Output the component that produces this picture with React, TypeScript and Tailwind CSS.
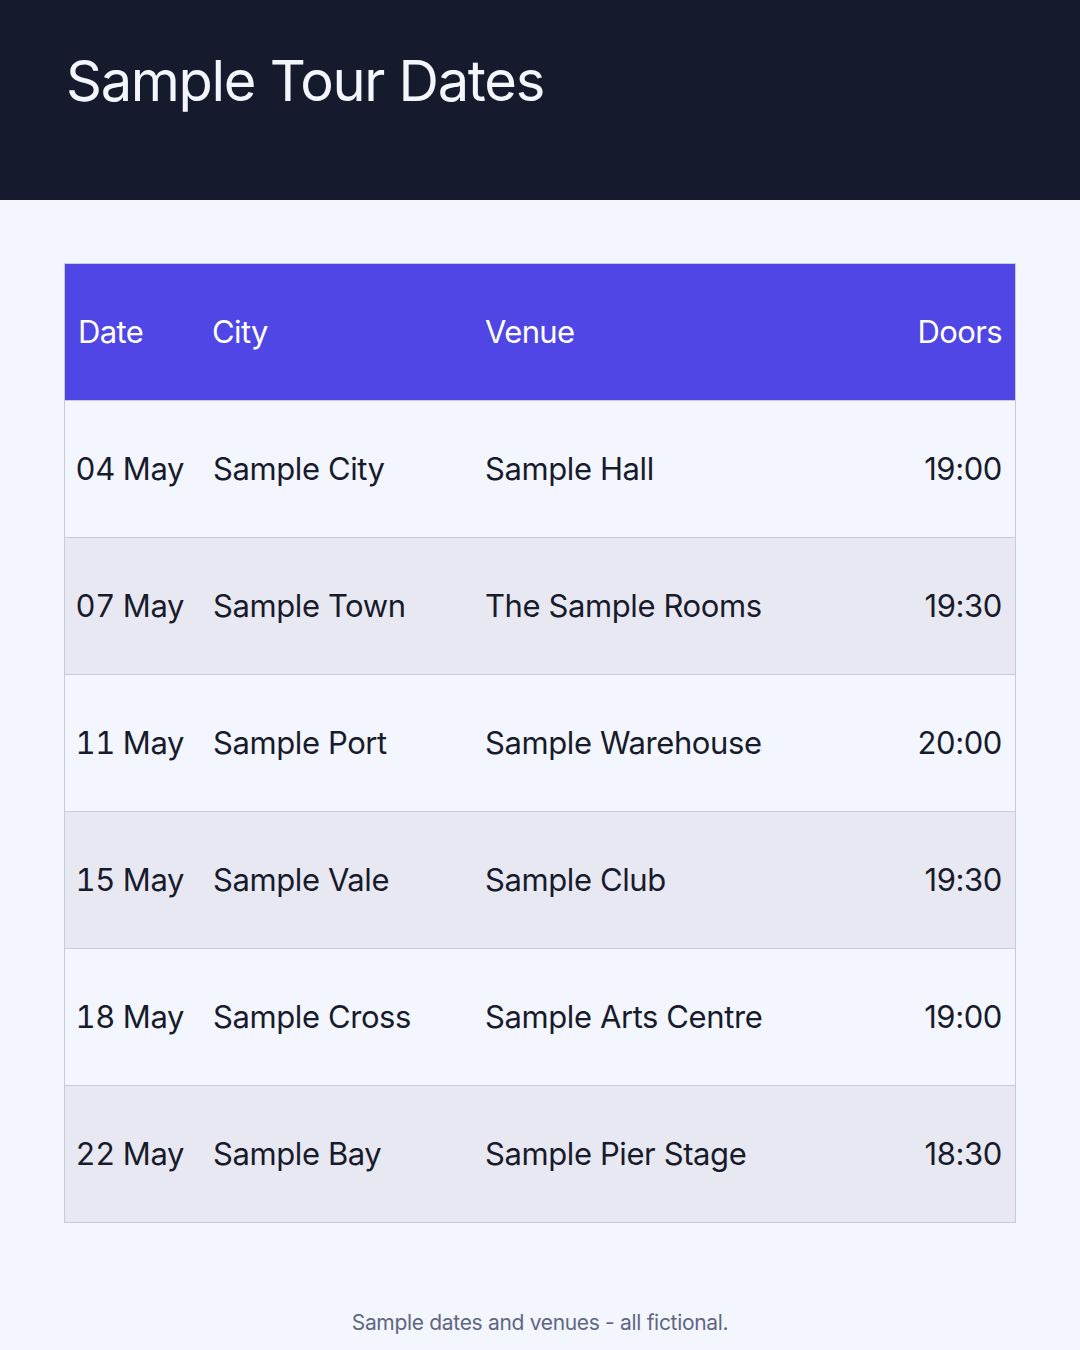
const dates = [
  { date: "04 May", city: "Sample City", venue: "Sample Hall", doors: "19:00" },
  { date: "07 May", city: "Sample Town", venue: "The Sample Rooms", doors: "19:30" },
  { date: "11 May", city: "Sample Port", venue: "Sample Warehouse", doors: "20:00" },
  { date: "15 May", city: "Sample Vale", venue: "Sample Club", doors: "19:30" },
  { date: "18 May", city: "Sample Cross", venue: "Sample Arts Centre", doors: "19:00" },
  { date: "22 May", city: "Sample Bay", venue: "Sample Pier Stage", doors: "18:30" },
];

const row = "grid grid-cols-[134px_273px_1fr_auto] items-center h-[137px] border-b border-[#c9cbdb]";

export default function App() {
  return (
    <div className="min-h-[1350px] w-[1080px] bg-[#f3f6fe] font-['Inter',sans-serif] text-[#181b2c]">
      {/* Header */}
      <header className="h-[200px] bg-[#161a2d] px-[66px] pt-[46px]">
        <h1 className="text-[56px] leading-[70px] tracking-[-0.023em] text-[#f3f6fe]">Sample Tour Dates</h1>
      </header>

      {/* Table */}
      <main className="px-[64px] pt-[63px]">
        <div className="border border-b-0 border-[#c9cbdb]">
          <div className={`${row} bg-[#4f46e5] text-white text-[31px] tracking-[-0.02em]`}>
            <span className="pl-[13px]">Date</span>
            <span className="pl-[13px]">City</span>
            <span className="pl-[13px]">Venue</span>
            <span className="pr-[13px] text-right">Doors</span>
          </div>
          {dates.map((d, i) => (
            <div
              key={d.date}
              className={`${row} text-[31px] tracking-[-0.013em] ${i % 2 ? "bg-[#e8e8f2]" : "bg-[#f3f6fe]"}`}
            >
              <span className="pr-[15px] text-right tabular-nums">{d.date}</span>
              <span className="pl-[14px]">{d.city}</span>
              <span className="pl-[13px]">{d.venue}</span>
              <span className="pr-[13px] text-right">{d.doors}</span>
            </div>
          ))}
        </div>
      </main>

      <footer className="pt-[84px] text-center text-[21px] tracking-[-0.015em] text-[#5f6684]">
        Sample dates and venues - all fictional.
      </footer>
    </div>
  );
}
